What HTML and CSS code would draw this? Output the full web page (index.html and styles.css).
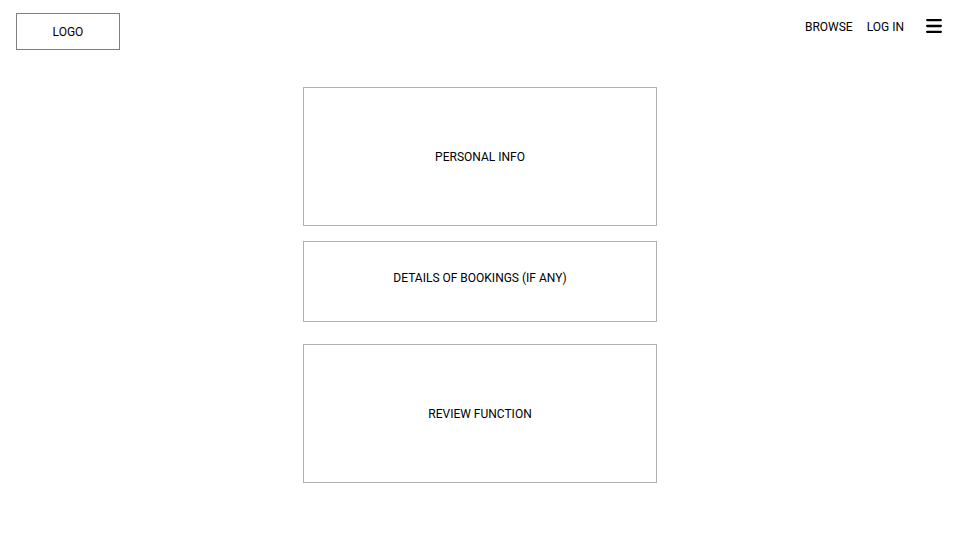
FILE: index.html
```html
<!DOCTYPE html>
<html lang="en">
<head>
<meta charset="utf-8">
<meta name="viewport" content="width=device-width, initial-scale=1">
<title>Account</title>
<link rel="stylesheet" href="styles.css">
</head>
<body>
<header class="topbar">
  <a class="logo" href="#">LOGO</a>
  <nav class="nav">
    <a href="#">BROWSE</a>
    <a href="#">LOG IN</a>
    <button class="menu" type="button" aria-label="Menu">
      <svg width="16" height="16" viewBox="0 0 16 16" aria-hidden="true">
        <path d="M1.2 2.1h13.6M1.2 8h13.6M1.2 13.9h13.6" stroke="#000" stroke-width="2.3" stroke-linecap="round"/>
      </svg>
    </button>
  </nav>
</header>
<main class="content">
  <section class="panel panel-large">PERSONAL INFO</section>
  <section class="panel panel-small">DETAILS OF BOOKINGS (IF ANY)</section>
  <section class="panel panel-large panel-review">REVIEW FUNCTION</section>
</main>
</body>
</html>
```
FILE: styles.css
```css
* {
  box-sizing: border-box;
}

body {
  margin: 0;
  background: #fff;
  color: #000;
  font: 12px/15px Roboto, Arial, sans-serif;
}

a {
  color: inherit;
  text-decoration: none;
}

.topbar {
  display: flex;
  justify-content: space-between;
  align-items: flex-start;
  padding: 13px 18px 0 16px;
}

.logo {
  min-width: 104px;
  padding: 11px 16px 9px;
  border: 1px solid #808080;
  text-align: center;
}

.nav {
  display: flex;
  align-items: flex-start;
  gap: 14px;
  padding-top: 5px;
}

.nav a {
  padding-top: 2px;
}

.menu {
  display: flex;
  margin-left: 8px;
  padding: 0;
  border: 0;
  background: none;
}

.content {
  max-width: 354px;
  margin: 37px auto;
}

.panel {
  display: flex;
  justify-content: center;
  align-items: center;
  padding-top: 2px;
  border: 1px solid #b0b0b0;
}

.panel-large {
  min-height: 139px;
}

.panel-small {
  min-height: 81px;
  margin-top: 15px;
  padding-bottom: 8px;
}

.panel-review {
  margin-top: 22px;
}
```
